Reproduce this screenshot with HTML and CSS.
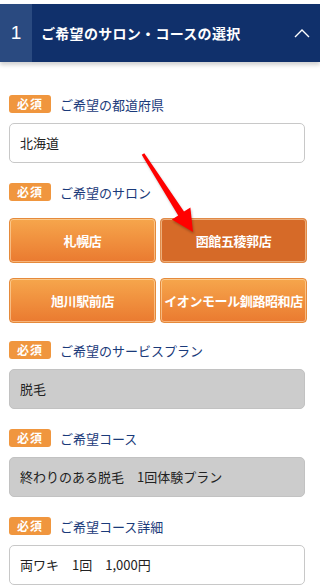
FILE: index.html
```html
<!DOCTYPE html>
<html>
<head>
    <meta charset="utf-8">
    <title>サロン・コースの選択</title>
    <link rel="stylesheet" href="styles.css">
</head>
<body>

    <div class="stepHead">
        <div class="stepNum">1</div>
        <div class="stepTitle">ご希望のサロン・コースの選択</div>
        <svg class="chevron" width="16" height="10" viewBox="0 0 16 10"><path d="M1 9 L8 2 L15 9" fill="none" stroke="#fff" stroke-width="1.4"/></svg>
    </div>

    <div id="form">
        <div class="field">
            <div class="labelRow"><span class="badge">必須</span><span class="label">ご希望の都道府県</span></div>
            <div class="box">北海道</div>
        </div>

        <div class="field salonField">
            <div class="labelRow"><span class="badge">必須</span><span class="label">ご希望のサロン</span></div>
            <div class="salonGrid">
                <div class="salonBtn">札幌店</div>
                <div class="salonBtn selected">函館五稜郭店</div>
                <div class="salonBtn">旭川駅前店</div>
                <div class="salonBtn">イオンモール釧路昭和店</div>
            </div>
        </div>

        <div class="field">
            <div class="labelRow"><span class="badge">必須</span><span class="label">ご希望のサービスプラン</span></div>
            <div class="box locked">脱毛</div>
        </div>

        <div class="field">
            <div class="labelRow"><span class="badge">必須</span><span class="label">ご希望コース</span></div>
            <div class="box locked">終わりのある脱毛　1回体験プラン</div>
        </div>

        <div class="field">
            <div class="labelRow"><span class="badge">必須</span><span class="label">ご希望コース詳細</span></div>
            <div class="box">両ワキ　1回　1,000円</div>
        </div>
    </div>

    <!-- annotation arrow over the form -->
    <svg class="arrow" width="320" height="588" viewBox="0 0 320 588">
        <polygon points="141.7,154.8 178.2,215.4 171.8,219.4 193,232 190.4,207.6 184,211.6 144.3,153.2" fill="#ff0000"/>
    </svg>

</body>
</html>
```

FILE: styles.css
```css
body {
    margin: 0;
    position: relative;
    background: #fff;
    font-family: "Noto Sans CJK JP", "Noto Sans", sans-serif;
    font-size: 13px;
    color: #222;
}
.stepHead {
    margin-top: 4px;
    height: 58px;
    display: flex;
    align-items: center;
    background: #10306b;
    color: #fff;
    box-shadow: 0 3px 4px rgba(0, 0, 0, 0.18);
}
.stepNum {
    width: 32px;
    height: 100%;
    display: flex;
    align-items: center;
    justify-content: center;
    background: #2a4a80;
    font-family: "Liberation Sans", sans-serif;
    font-size: 19px;
}
.stepTitle {
    flex: 1;
    padding-left: 9px;
    font-size: 14px;
    font-weight: bold;
    letter-spacing: 0.3px;
}
.chevron {
    margin-right: 10px;
}
#form {
    padding: 33px 15px 0 9px;
}
.field {
    margin-bottom: 20px;
}
.salonField {
    margin-bottom: 18px;
}
.labelRow {
    display: flex;
    align-items: center;
    height: 18px;
    margin-bottom: 10px;
}
.badge {
    width: 42px;
    height: 18px;
    line-height: 18px;
    text-align: center;
    background: #f0963e;
    color: #fff;
    font-size: 12px;
    font-weight: bold;
    border-radius: 3px;
    letter-spacing: 1px;
}
.label {
    margin-left: 9px;
    color: #1a3a7a;
}
.box {
    height: 38px;
    line-height: 38px;
    padding: 0 10px;
    border: 1px solid #c8c8c8;
    border-radius: 5px;
    background: #fff;
}
.box.locked {
    background: #cccccc;
    border-color: #c2c2c2;
}
.salonGrid {
    display: grid;
    grid-template-columns: 147px 147px;
    gap: 15px 4px;
    width: 298px;
    padding-top: 7px;
}
.salonBtn {
    height: 43px;
    display: flex;
    align-items: center;
    justify-content: center;
    border: 1px solid #e58a3b;
    border-radius: 4px;
    background: linear-gradient(#f6a64c, #ea7a30);
    box-shadow: inset 0 0 0 1px rgba(255, 230, 190, 0.55);
    color: #fff;
    font-weight: bold;
    font-size: 13px;
    letter-spacing: -0.4px;
}
.salonBtn.selected {
    background: #d66a28;
    border-color: #e08a48;
}
.arrow {
    position: absolute;
    top: 0;
    left: 0;
    pointer-events: none;
    filter: drop-shadow(1px 2px 1px rgba(0, 0, 0, 0.25));
}
```
